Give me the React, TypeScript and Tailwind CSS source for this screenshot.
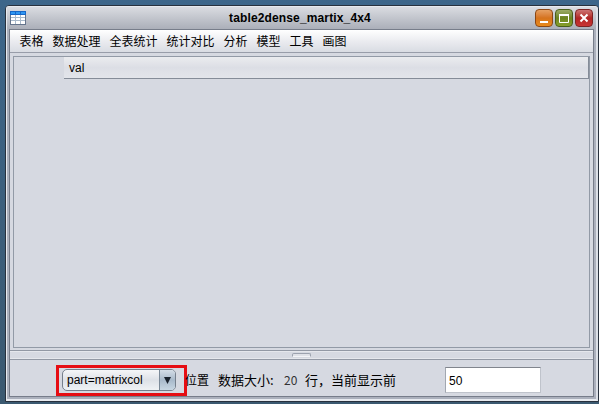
const menus = ['表格', '数据处理', '全表统计', '统计对比', '分析', '模型', '工具', '画图'];

function TableIcon() {
  return (
    <svg className="ml-[3px] h-[14px] w-4" viewBox="0 0 16 14" shapeRendering="crispEdges">
      <rect width="16" height="14" fill="#64748c" />
      <rect x="1" y="4" width="14" height="9" fill="#fff" />
      <rect width="16" height="4" fill="#1768c8" />
      <path d="M1 1h4v2H1zM6 1h4v2H6zM11 1h4v2h-4z" fill="#2f97f2" />
      <path d="M5 4h1v9H5zM10 4h1v9h-1zM1 6h14v1H1zM1 9h14v1H1z" fill="#a9bacb" />
    </svg>
  );
}

function WindowButtons() {
  const base = 'flex h-[18px] w-[18px] items-center justify-center rounded-[4px] border';
  return (
    <div className="flex gap-[2px]">
      <div className={`${base} border-[#8c4714] bg-linear-to-b from-[#e6a062] via-[#d5731d] to-[#e98a1b]`}>
        <svg className="h-4 w-4 shrink-0" viewBox="0 0 16 16"><path d="M4 11h8v2H4z" fill="#fff" /></svg>
      </div>
      <div className={`${base} border-[#4a5f1c] bg-linear-to-b from-[#9cab67] via-[#6c8420] to-[#88a02b]`}>
        <svg className="h-4 w-4 shrink-0" viewBox="0 0 16 16"><path d="M3.5 4.5h9v8h-9z" fill="none" stroke="#fff" /><path d="M3 4h10v2H3z" fill="#fff" /></svg>
      </div>
      <div className={`${base} border-[#7c2424] bg-linear-to-b from-[#cc7272] via-[#b12424] to-[#c93434]`}>
        <svg className="h-4 w-4 shrink-0" viewBox="0 0 16 16"><path d="M4.5 4.5l7 7m0-7l-7 7" stroke="#fff" strokeWidth="2" /></svg>
      </div>
    </div>
  );
}

export default function App() {
  return (
    <div className="h-[404px] w-[599px] overflow-hidden bg-linear-to-b from-[#3d668a] to-[#3b5970] pt-[5px] pl-[5px] font-['Liberation_Sans','Noto_Sans_CJK_SC',sans-serif] text-xs text-black">
      <div className="h-[397px] w-[594px] rounded-t-[4px] border border-[#28313d] bg-[#abb0bc]">
        <div className="h-[395px] rounded-t-[3px] border-2 border-t border-l border-[#e7eaef] border-r-[#dce0e7] pr-[2px] pl-[2px]">
          <header className="-mx-[2px] flex h-[22px] items-center bg-linear-to-b from-[#dadce1] to-[#abafb9] pr-[3px]">
            <TableIcon />
            <h1 className="flex-1 pl-[39px] text-center text-xs font-bold">
              <span className="inline-block w-[142px] text-left tracking-[0.14px] whitespace-nowrap">table2dense_martix_4x4</span>
            </h1>
            <WindowButtons />
          </header>
          <main className="h-[368px] w-[585px] border border-[#777d8a] bg-[#d6d9e1]">
            <nav className="flex h-[23px] items-center gap-[9px] border-b border-[#989da9] bg-linear-to-b from-white via-[#ebecf0] to-[#d9dce3] pl-[9.5px] font-['Noto_Sans_CJK_SC',sans-serif]">
              {menus.map((menu) => <span key={menu}>{menu}</span>)}
            </nav>
            <div className="px-[3px] pt-[3px]">
              <section className="h-[292px] w-[577px] border border-[#929aa6] pl-[50px]">
                <div className="flex h-[22px] items-center border-r border-b border-[#858c98] bg-linear-to-b from-[#ebecef] via-[#dcdee5] to-[#e3e5ea] pl-[5px]">
                  <span>val</span>
                </div>
              </section>
            </div>
            <div className="mt-[2px] flex h-[10px] justify-center border-y border-[#9298a4] pt-[2px] shadow-[inset_0_1px_0_#e5e7ec,inset_0_-1px_0_#e5e7ec]">
              <div className="h-[4px] w-[19px] rounded-t-[2px] border border-[#9ca2ae] border-b-[#f2f3f6] bg-[#dfe1e7]" />
            </div>
            <footer className="flex h-[36px] pl-[46px]">
              <div className="mt-[5px] flex h-[31px] w-[131px] shrink-0 items-center border-3 border-[#e60d13] pl-[3px]">
                <button className="mb-px flex h-[22px] w-[114px] items-stretch overflow-hidden rounded-[5px] border border-[#757f8c] bg-linear-to-b from-[#f5f6f8] via-[#dde1e7] to-[#eff2f5] text-left">
                  <span className="w-[96px] pt-[2px] pl-[4px] whitespace-nowrap">part=matrixcol</span>
                  <span className="flex flex-1 items-center justify-center border-l border-[#7a8998] bg-linear-to-b from-[#d4dde7] via-[#a8b9ca] to-[#c8d7e3]">
                    <svg className="h-[7px] w-[7px]" viewBox="0 0 7 7"><path d="M0 0h7L3.5 7z" fill="#18212c" /></svg>
                  </span>
                </button>
              </div>
              <div className="flex h-[40px] w-[258px] shrink-0 items-center font-['Noto_Sans_CJK_SC',sans-serif] text-[13px] whitespace-pre">
                <span className="-ml-[2px] w-[33px] shrink-0 text-xs">位置</span>
                <span className="w-[66px] shrink-0">数据大小:</span>
                <span className="w-[21px] shrink-0 text-xs text-[#333]">20</span>
                <span className="w-[26px] shrink-0">行，</span>
                <span>当前显示前</span>
              </div>
              <div className="mt-[7px] flex h-[26px] w-[96px] items-center border border-[#bfc3cb] border-t-[#81858d] border-l-[#a2a7b0] bg-white pl-[3px]">
                <span className="pt-px">50</span>
              </div>
            </footer>
          </main>
        </div>
      </div>
    </div>
  );
}
